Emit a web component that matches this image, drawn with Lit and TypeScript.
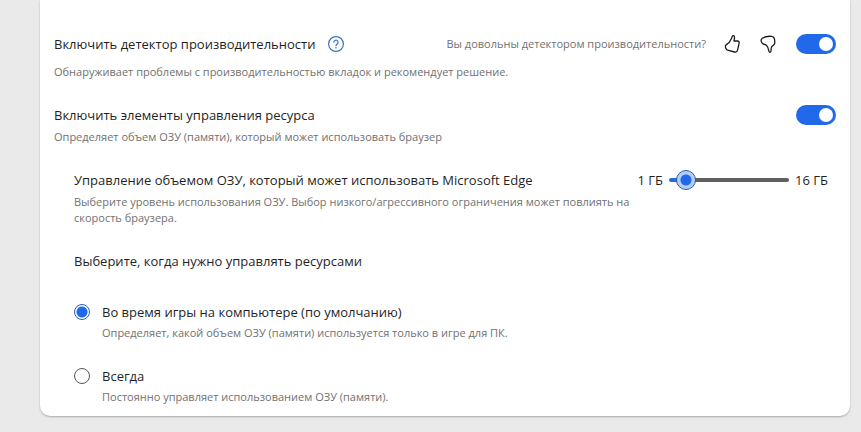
import { LitElement, html, css } from "lit";
import { customElement, property, state } from "lit/decorators.js";
import { styleMap } from "lit/directives/style-map.js";

@customElement("toggle-switch")
class ToggleSwitch extends LitElement {
  @property() label = "";
  @property({ type: Boolean }) checked = false;

  static styles = css`
    :host {
      display: block;
      flex: none;
      height: 20px;
    }
    .switch {
      appearance: none;
      display: flex;
      align-items: center;
      justify-content: flex-start;
      box-sizing: border-box;
      width: 40px;
      height: 20px;
      margin: 0;
      padding: 0 3px;
      border-radius: 10px;
      background: #767676;
      cursor: pointer;
    }
    .switch::before {
      content: "";
      width: 14px;
      height: 14px;
      border-radius: 50%;
      background: #fff;
    }
    .switch:checked {
      justify-content: flex-end;
      background: #2169eb;
    }
  `;

  render() {
    return html`<input
      class="switch"
      type="checkbox"
      role="switch"
      aria-label=${this.label}
      .checked=${this.checked}
    />`;
  }
}

@customElement("app-root")
class AppRoot extends LitElement {
  @state() private memory = 2;
  private readonly min = 1;
  private readonly max = 16;

  static styles = css`
    :host {
      display: block;
      box-sizing: border-box;
      min-height: 100vh;
      padding: 0 11px 16px 40px;
      background: #eaeaea;
      color: #1f1f1f;
      font-family: "Segoe UI", "Open Sans", "Noto Sans", sans-serif;
      font-size: 13px;
      line-height: 20px;
    }
    .card {
      padding: 32px 14px 11px;
      border-radius: 0 0 10px 10px;
      background: #fff;
      box-shadow: 0 1px 2px rgba(0, 0, 0, 0.28);
    }
    h2,
    p,
    fieldset,
    legend {
      margin: 0;
      padding: 0;
      border: 0;
      font-size: inherit;
      font-weight: 400;
    }
    .row {
      display: flex;
      align-items: center;
    }
    .detector {
      height: 24px;
    }
    .grow {
      flex: 1;
    }
    .note {
      color: #717171;
      font-size: 11px;
      line-height: 16px;
    }
    .gap-s {
      margin-top: 4px;
    }
    .gap-m {
      margin-top: 8px;
    }
    .section {
      margin-top: 25px;
    }
    .icon {
      display: block;
      flex: none;
      padding: 0;
      border: 0;
      background: none;
      color: #1b1b1b;
      cursor: pointer;
    }
    .icon svg {
      display: block;
    }
    .help {
      margin-left: 12px;
      color: #3a74bd;
    }
    .feedback {
      display: flex;
      align-items: center;
      gap: 16px;
      margin-right: 18px;
    }
    .nested {
      padding-left: 20px;
    }
    .memory {
      display: flex;
      justify-content: space-between;
      align-items: flex-start;
    }
    .memory-text {
      max-width: 564px;
    }
    .range {
      display: flex;
      align-items: center;
      gap: 6px;
      margin-right: 8px;
      white-space: nowrap;
    }
    .slider {
      appearance: none;
      width: 120px;
      height: 20px;
      margin: 0;
      background: none;
      cursor: pointer;
    }
    .slider::-webkit-slider-runnable-track {
      height: 4px;
      border-radius: 2px;
      background: linear-gradient(
        to right,
        #2169eb var(--fill),
        #5f5f5f var(--fill)
      );
    }
    .slider::-webkit-slider-thumb {
      appearance: none;
      box-sizing: border-box;
      width: 20px;
      height: 20px;
      margin-top: -8px;
      border: 1px solid #2c5ca8;
      border-radius: 50%;
      background: radial-gradient(circle, #2169eb 5px, #b4cef8 6px);
    }
    .option {
      display: grid;
      grid-template-columns: 16px 1fr;
      column-gap: 12px;
      row-gap: 3px;
      align-items: center;
      margin-top: 25px;
    }
    legend + .option {
      margin-top: 31px;
    }
    .option .note {
      grid-column: 2;
    }
    .radio {
      appearance: none;
      box-sizing: border-box;
      width: 16px;
      height: 16px;
      margin: 0;
      border: 1px solid #555;
      border-radius: 50%;
      background: #fff;
    }
    .radio:checked {
      border-color: #2862b8;
      background: radial-gradient(circle, #2169eb 5px, #fff 6px);
    }
  `;

  private onInput(e: Event) {
    this.memory = Number((e.target as HTMLInputElement).value);
  }

  render() {
    const fill = ((this.memory - this.min) / (this.max - this.min)) * 100;
    return html`
      <main class="card">
        <section>
          <div class="row detector">
            <h2>Включить детектор производительности</h2>
            <button class="icon help" aria-label="Справка">
              <svg width="18" height="18" viewBox="0 0 18 18" fill="none" stroke="currentColor">
                <circle cx="9" cy="9" r="7.4" stroke-width="1.2" />
                <path d="M6.9 7.2a2.1 2.1 0 1 1 3.3 1.7C9.4 9.5 9 9.8 9 10.7" stroke-width="1.2" stroke-linecap="round" />
                <circle cx="9" cy="12.7" r=".8" fill="currentColor" stroke="none" />
              </svg>
            </button>
            <span class="grow"></span>
            <div class="feedback">
              <span class="note">Вы довольны детектором производительности?</span>
              <button class="icon" aria-label="Нравится">
                <svg width="20" height="20" viewBox="0 0 20 20" fill="none" stroke="currentColor" stroke-width="1.3" stroke-linejoin="round">
                  <path d="M10.3 2.3C10.8 1.3 12.2 1.6 12.5 2.9C12.8 4.3 12.3 5.7 11.9 7H15.4C16.8 7 17.4 7.9 17.1 9.200L15.600 16.200C15.200 17.700 14 18.400 12.500 18L5.600 16.200C4.700 15.900 4.200 15.400 3.900 14.600L3.400 13C3.100 12 3.500 11.100 4.400 10.600C7.300 9 8.200 7.600 9.500 4.500Z" />
                </svg>
              </button>
              <button class="icon" aria-label="Не нравится">
                <svg width="20" height="20" viewBox="0 0 20 20" fill="none" stroke="currentColor" stroke-width="1.3" stroke-linejoin="round">
                  <path d="M3.300 7.600C2.800 6.200 3.100 5.100 4.300 4.300C6.800 2.700 10.500 2 13.800 2.400C15.400 2.600 16.200 3.500 16.500 5L16.800 8C17 9.600 16.400 10.700 15.200 11.400C13.900 12.100 13.300 12.800 13.200 14.200L13 17C12.900 18.600 11.300 18.700 10.900 17.200C10.300 14.700 10.200 12.700 8.400 11.200C7.600 10.600 6.300 10.600 5.100 9.900C4.100 9.300 3.600 8.600 3.300 7.600Z" />
                </svg>
              </button>
            </div>
            <toggle-switch label="Включить детектор производительности" checked></toggle-switch>
          </div>
          <p class="note gap-m">
            Обнаруживает проблемы с производительностью вкладок и рекомендует решение.
          </p>
        </section>

        <section class="section">
          <div class="row">
            <h2 class="grow">Включить элементы управления ресурса</h2>
            <toggle-switch label="Включить элементы управления ресурса" checked></toggle-switch>
          </div>
          <p class="note gap-s">
            Определяет объем ОЗУ (памяти), который может использовать браузер
          </p>
        </section>

        <div class="nested">
          <section class="section memory">
            <div class="memory-text">
              <h2><label for="memory">Управление объемом ОЗУ, который может использовать Microsoft Edge</label></h2>
              <p class="note gap-s">
                Выберите уровень использования ОЗУ. Выбор низкого/агрессивного
                ограничения может повлиять на скорость браузера.
              </p>
            </div>
            <div class="range">
              <span>1 ГБ</span>
              <input
                id="memory"
                class="slider"
                type="range"
                min=${this.min}
                max=${this.max}
                .value=${String(this.memory)}
                style=${styleMap({ "--fill": `${fill}%` })}
                @input=${this.onInput}
              />
              <span>16 ГБ</span>
            </div>
          </section>

          <fieldset class="section">
            <legend>Выберите, когда нужно управлять ресурсами</legend>
            <div class="option">
              <input class="radio" type="radio" name="when" id="gaming" checked />
              <label for="gaming">Во время игры на компьютере (по умолчанию)</label>
              <p class="note">
                Определяет, какой объем ОЗУ (памяти) используется только в игре для ПК.
              </p>
            </div>
            <div class="option">
              <input class="radio" type="radio" name="when" id="always" />
              <label for="always">Всегда</label>
              <p class="note">Постоянно управляет использованием ОЗУ (памяти).</p>
            </div>
          </fieldset>
        </div>
      </main>
    `;
  }
}
